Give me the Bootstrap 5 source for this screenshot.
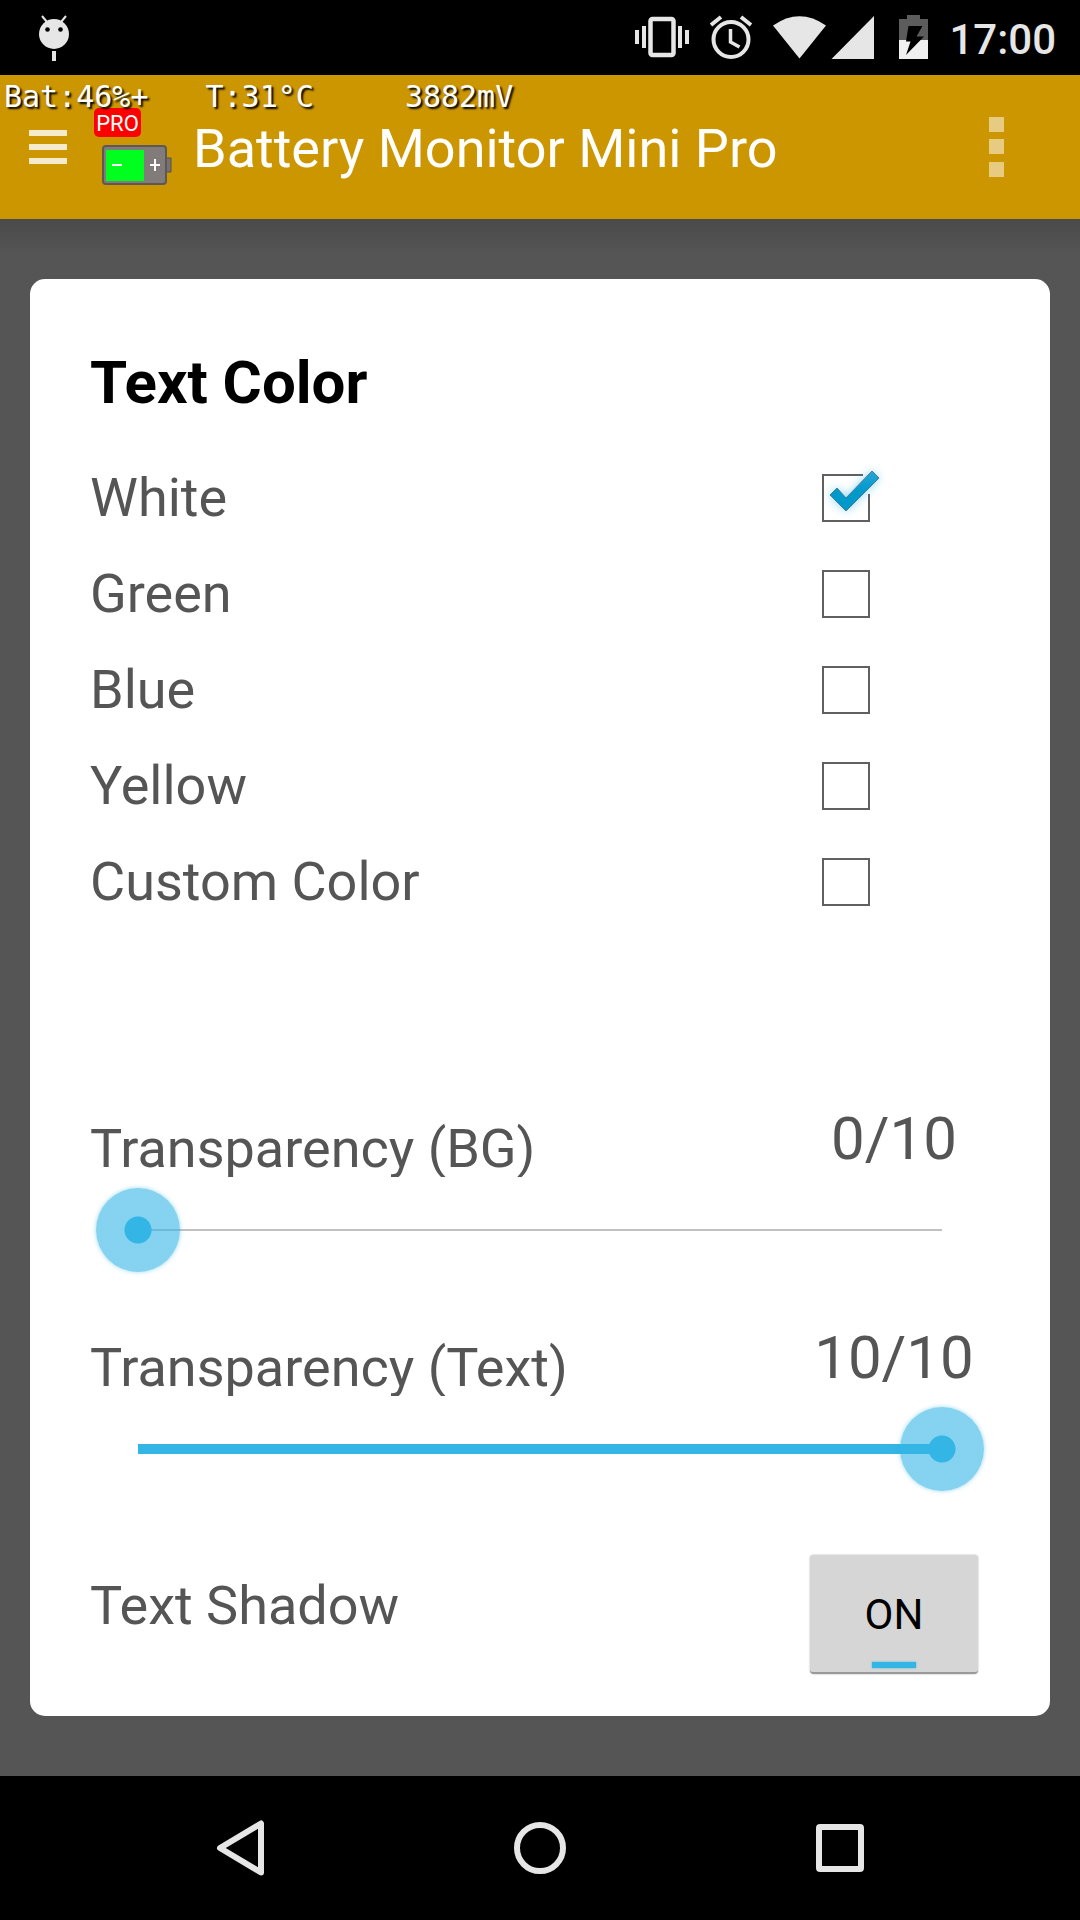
<!DOCTYPE html>
<html lang="en">
<head>
<meta charset="utf-8">
<meta name="viewport" content="width=device-width, initial-scale=1">
<title>Battery Monitor Mini Pro</title>
<link rel="stylesheet" href="https://cdn.jsdelivr.net/npm/bootstrap@5.3.0/dist/css/bootstrap.min.css">
<style>
  body { font-family: Roboto, "Noto Sans", sans-serif; background: #000; color: #555; }
  button { font: inherit; }
  .status-bar { height: 75px; background: #000; color: #e6e6e6; padding: 0 24px 0 39px; }
  .status-icons { gap: 21px; }
  .status-time { font-size: 42px; font-weight: 500; line-height: 72px; padding-top: 4px; }
  .status-icons svg { display: block; }
  .app-bar { height: 144px; background: #cc9600; color: #fff; padding: 0 76px 0 29px; }
  .app-title { font-size: 54px; font-weight: 400; line-height: 140px; padding-top: 4px; margin-left: 21px; }
  .bare-btn { border: 0; background: none; padding: 0; }
  .bare-btn svg { display: block; }
  .battery-overlay { top: 0; left: 4px; font: 30px/44px "DejaVu Sans Mono", monospace; text-shadow: 2px 2px 2px #000; }
  .overlay-temp { margin: 0 91px 0 57px; }
  .app-logo { width: 78px; height: 78px; margin-left: 27px; }
  .logo-tag { font: 22px "Liberation Sans Narrow", Roboto, sans-serif; }
  .settings-area { background: linear-gradient(#4a4a4a, #555 36px); padding: 60px 30px; }
  .settings-card { border-radius: 15px; padding: 60px 60px 42px; }
  .settings-title { font-size: 60px; line-height: 87px; margin-bottom: 24px; font-weight: 700; color: #000; }
  .option-label { font-size: 54px; line-height: 96px; }
  .control-col { width: 192px; }
  .color-check { display: block; width: 48px; height: 48px; margin-left: 24px; appearance: none; border: 2px solid #606060; }
  .color-check:checked { border-color: transparent; }
  .check-art { display: none; left: 24px; top: -12px; pointer-events: none; }
  .color-check:checked + .check-art { display: block; }
  .slider-group { padding-top: 174px; }
  .slider-group + .slider-group { padding-top: 51px; }
  .slider-label { font-size: 54px; line-height: 64px; height: 60px; overflow: hidden; }
  .slider-value { font-size: 60px; line-height: 70px; padding-bottom: 3px; }
  .seek { display: block; width: calc(100% - 12px); height: 84px; margin: 11px 6px 0; appearance: none; background: none; }
  .seek::-webkit-slider-runnable-track {
    height: 84px;
    background:
      linear-gradient(#33b5e5, #33b5e5) 42px 50% / calc((100% - 84px) * var(--level)) 10px no-repeat,
      linear-gradient(#c1c1c1, #c1c1c1) 42px 50% / calc(100% - 84px) 2px no-repeat;
  }
  .seek::-webkit-slider-thumb {
    appearance: none; width: 84px; height: 84px; border: 0; border-radius: 50%;
    background: radial-gradient(circle, #33b5e5 13px, rgba(51, 181, 229, .6) 14px);
    box-shadow: 0 0 4px rgba(51, 181, 229, .5);
  }
  .shadow-row { margin-top: 64px; }
  .shadow-label { font-size: 54px; line-height: 102px; }
  .toggle-on { width: 168px; height: 119px; padding: 2px 0 0; font-size: 42px; color: #000; background: #d6d6d6; border: 0; border-bottom: 2px solid #999; border-radius: 4px; box-shadow: 0 0 2px #aaa; }
  .toggle-on::after { content: ""; left: 62px; bottom: 4px; width: 44px; height: 6px; background: #33b5e5; position: absolute; box-shadow: 0 0 2px #33b5e5; }
  .nav-keys { height: 144px; padding: 0 90px; }
</style>
</head>
<body class="d-flex flex-column min-vh-100">
<header>
  <div class="status-bar d-flex align-items-center justify-content-between">
    <svg width="30" height="46" viewBox="0 0 30 46" fill="#e6e6e6" aria-hidden="true">
      <path d="M3 1l5 6M27 1l-5 6" stroke="#e6e6e6" stroke-width="2"/>
      <circle cx="15" cy="19" r="15"/><circle cx="8.500" cy="14.500" r="2.300" fill="#000"/><circle cx="21.500" cy="14.500" r="2.300" fill="#000"/>
      <path d="M13 36h4v10h-4z"/>
    </svg>
    <div class="status-icons d-flex align-items-center">
      <svg width="293" height="75" viewBox="635 0 293 75" fill="#e6e6e6" aria-hidden="true">
        <path d="M635 30h4v14h-4zM642 26h4v22h-4zM678 26h4v22h-4zM685 30h4v14h-4z"/>
        <rect x="650.500" y="19" width="23" height="36" rx="2" fill="none" stroke="#e6e6e6" stroke-width="4.500"/>
        <g fill="none" stroke="#e6e6e6"><circle cx="731" cy="39.500" r="17.500" stroke-width="4"/><path d="M730.500 29v13l9 5" stroke-width="3.500"/><path d="M711 25l10-8M751 25l-10-8" stroke-width="4"/></g>
        <path d="M773 25.500Q799.500 7 826 25.500L799.500 58.500z"/>
        <path d="M831.500 59L874 16v43z"/>
        <path d="M907 15h13v4h8v21h-29V19h8z" fill="#5c5c5c"/><path d="M899 40h29v19h-29z" fill="#f0f0f0"/>
        <path d="M908.500 26H922.500L916.500 36.500H924L906 55 910.500 41.500H906z" fill="#000"/>
      </svg>
      <span class="status-time">17:00</span>
    </div>
  </div>
  <div class="app-bar position-relative d-flex align-items-center">
    <div class="battery-overlay position-absolute d-flex"><span>Bat:46%+</span><span class="overlay-temp">T:31°C</span><span>3882mV</span></div>
    <button class="bare-btn" type="button" aria-label="Open menu">
      <svg width="38" height="34" viewBox="0 0 38 34" fill="#fff" fill-opacity=".8"><path d="M0 0h38v6H0zM0 14h38v6H0zM0 28h38v6H0z"/></svg>
    </button>
    <svg class="app-logo" viewBox="94 108 78 78" aria-hidden="true">
      <rect x="94" y="108" width="47" height="29" rx="5" fill="red"/>
      <text class="logo-tag" x="117.500" y="131" text-anchor="middle" fill="#fff">PRO</text>
      <path d="M166 158h5v14h-5z" fill="#777270" stroke="#55504d"/>
      <rect x="103" y="146" width="63" height="38" rx="3" fill="#817c79" stroke="#5c5855" stroke-width="2"/>
      <path d="M106 150h38v31h-38z" fill="#00ff1e"/>
      <path d="M112 165h10M150 165h10M155 159v12" stroke="#fff" stroke-width="2"/>
    </svg>
    <h1 class="app-title mb-0 flex-grow-1">Battery Monitor Mini Pro</h1>
    <button class="bare-btn" type="button" aria-label="More options">
      <svg width="15" height="60" viewBox="0 0 15 60" fill="#e6cb80"><path d="M0 0h15v15H0zM0 22h15v15H0zM0 45h15v15H0z"/></svg>
    </button>
  </div>
</header>
<main class="settings-area flex-grow-1">
  <form class="settings-card bg-white">
    <h2 class="settings-title">Text Color</h2>
    <div class="d-flex align-items-center">
      <label class="option-label flex-grow-1" for="c-white">White</label>
      <div class="control-col position-relative">
        <input class="color-check" type="checkbox" id="c-white" checked>
        <svg class="check-art position-absolute" width="72" height="60" viewBox="0 -12 72 60" overflow="visible" aria-hidden="true">
          <defs>
            <filter id="glow" x="-50%" y="-50%" width="200%" height="200%"><feGaussianBlur stdDeviation="5"/></filter>
            <linearGradient id="tick" x1="0" y1="0" x2="0" y2="1"><stop offset="0" stop-color="#2aa5d6"/><stop offset=".5" stop-color="#0099cc"/></linearGradient>
          </defs>
          <path d="M41 1H1v46h46V20" fill="none" stroke="#606060" stroke-width="2"/>
          <path d="M8 21l7-7 9 10L50-3l7 7-33 33z" fill="#33b5e5" opacity=".6" filter="url(#glow)"/>
          <path d="M8 21l7-7 9 10L50-3l7 7-33 33z" fill="url(#tick)" stroke="#4c7a8c"/>
        </svg>
      </div>
    </div>
    <div class="d-flex align-items-center">
      <label class="option-label flex-grow-1" for="c-green">Green</label>
      <div class="control-col"><input class="color-check" type="checkbox" id="c-green"></div>
    </div>
    <div class="d-flex align-items-center">
      <label class="option-label flex-grow-1" for="c-blue">Blue</label>
      <div class="control-col"><input class="color-check" type="checkbox" id="c-blue"></div>
    </div>
    <div class="d-flex align-items-center">
      <label class="option-label flex-grow-1" for="c-yellow">Yellow</label>
      <div class="control-col"><input class="color-check" type="checkbox" id="c-yellow"></div>
    </div>
    <div class="d-flex align-items-center">
      <label class="option-label flex-grow-1" for="c-custom">Custom Color</label>
      <div class="control-col"><input class="color-check" type="checkbox" id="c-custom"></div>
    </div>

    <div class="slider-group">
      <div class="d-flex align-items-end">
        <label class="slider-label flex-grow-1" for="s-bg">Transparency (BG)</label>
        <output class="slider-value control-col text-center" for="s-bg">0/10</output>
      </div>
      <input class="seek" type="range" id="s-bg" min="0" max="10" value="0" style="--level: 0">
    </div>
    <div class="slider-group">
      <div class="d-flex align-items-end">
        <label class="slider-label flex-grow-1" for="s-text">Transparency (Text)</label>
        <output class="slider-value control-col text-center" for="s-text">10/10</output>
      </div>
      <input class="seek" type="range" id="s-text" min="0" max="10" value="10" style="--level: 1">
    </div>

    <div class="shadow-row d-flex align-items-start">
      <label class="shadow-label flex-grow-1" for="t-shadow">Text Shadow</label>
      <div class="control-col d-flex justify-content-center">
        <button class="toggle-on position-relative" type="button" id="t-shadow" aria-pressed="true">ON</button>
      </div>
    </div>
  </form>
</main>
<nav class="nav-keys d-flex align-items-center" aria-label="System keys">
  <button class="bare-btn col d-flex justify-content-center" type="button" aria-label="Back">
    <svg width="48" height="56" viewBox="0 0 48 56"><path d="M45 3.500v49L4 28z" fill="none" stroke="#e6e6e6" stroke-width="6" stroke-linejoin="round"/></svg>
  </button>
  <button class="bare-btn col d-flex justify-content-center" type="button" aria-label="Home">
    <svg width="52" height="52" viewBox="0 0 52 52"><circle cx="26" cy="26" r="23" fill="none" stroke="#e6e6e6" stroke-width="6"/></svg>
  </button>
  <button class="bare-btn col d-flex justify-content-center" type="button" aria-label="Recent apps">
    <svg width="48" height="48" viewBox="0 0 48 48"><rect x="3" y="3" width="42" height="42" rx="1" fill="none" stroke="#e6e6e6" stroke-width="6" stroke-linejoin="round"/></svg>
  </button>
</nav>
<script src="https://cdn.jsdelivr.net/npm/bootstrap@5.3.0/dist/js/bootstrap.bundle.min.js"></script>
</body>
</html>
